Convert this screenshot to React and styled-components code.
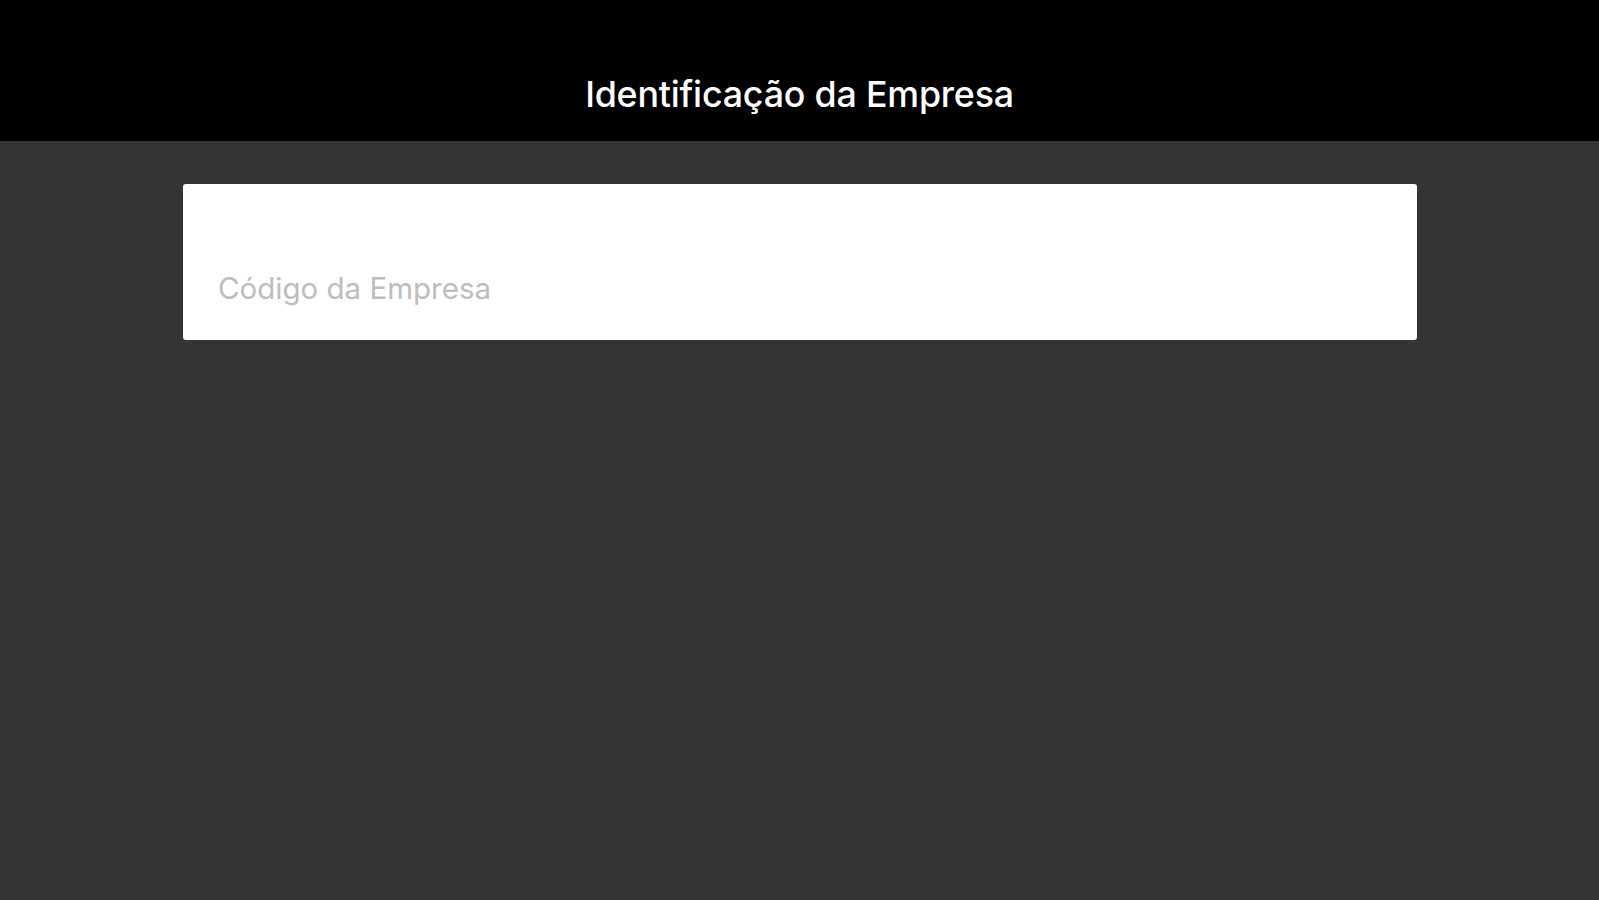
import styled, { createGlobalStyle } from "styled-components";

const GlobalStyle = createGlobalStyle`
    html, body {
        margin: 0;
        padding: 0;
        height: 100%;
        background: #343434;
    }
    #root {
        min-height: 100vh;
    }
`;

const App = () => {
    return (
        <>
            <GlobalStyle />
            <Page>
                <Header>
                    <Title>Identificação da Empresa</Title>
                </Header>
                <Content>
                    <Field>
                        <Input type="text" placeholder="Código da Empresa" />
                    </Field>
                </Content>
            </Page>
        </>
    );
};

export default App;

const Page = styled.div`
    display: flex;
    flex-direction: column;
    min-height: 100vh;
    background-color: #343434;
    font-family: Inter, "Liberation Sans", sans-serif;
`;

const Header = styled.header`
    height: 141px;
    box-sizing: border-box;
    padding-bottom: 25px;
    background-color: #000;
    display: flex;
    align-items: flex-end;
    justify-content: center;
`;

const Title = styled.h1`
    margin: 0;
    color: #fff;
    font-size: 35.8px;
    line-height: 44px;
    font-weight: 500;
    letter-spacing: -0.2px;
`;

const Content = styled.main`
    padding: 43px 182px 0 183px;
`;

const Field = styled.div`
    height: 156px;
    background-color: #fff;
    border-radius: 3px;
    display: flex;
    align-items: flex-end;
    padding: 0 35px 34px;
    box-sizing: border-box;
`;

const Input = styled.input`
    width: 100%;
    border: none;
    outline: none;
    background: transparent;
    padding: 0;
    font-family: inherit;
    font-size: 29.5px;
    line-height: 36px;
    color: #222;
    &::placeholder {
        color: #bdbdbd;
    }
`;
